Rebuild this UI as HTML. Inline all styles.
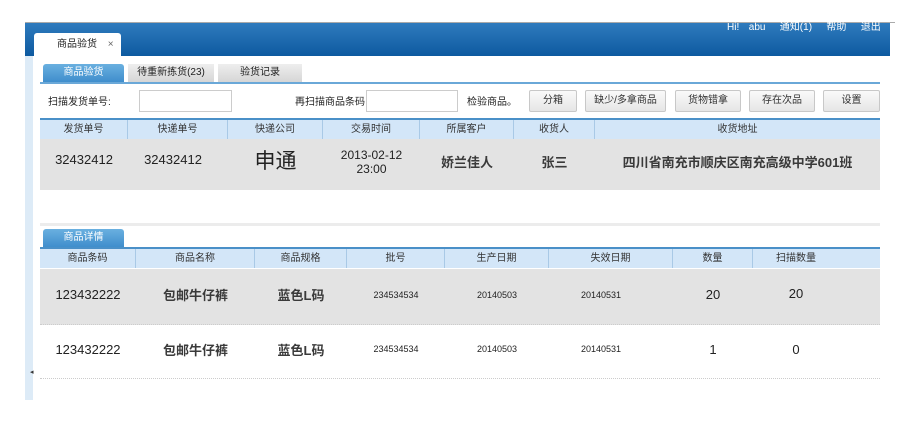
<!DOCTYPE html>
<html><head><meta charset="utf-8"><style>
*{margin:0;padding:0;box-sizing:border-box}
body{width:917px;height:425px;background:#fff;position:relative;overflow:hidden;font-family:"Liberation Sans","Noto Sans CJK SC",sans-serif;color:#222}
.a{position:absolute}
.c{position:absolute;text-align:center;white-space:nowrap}
.b{font-weight:bold;color:#3a3a3a}
.hd{background:#d3e6f8;border-top:2px solid #4a90c8;height:21px}
.hd div{position:absolute;top:0;height:19px;line-height:19px;text-align:center;font-size:10px;color:#333;border-right:1px solid #a9c9e6}
.btn{position:absolute;top:90px;height:22px;border:1px solid #c8c8c8;border-radius:2px;background:linear-gradient(#fafafa,#e6e6e6);font-size:10px;line-height:20px;text-align:center;color:#333}
.inp{position:absolute;top:90px;height:22px;border:1px solid #ccc;background:#fff}
</style></head><body>
<div class="a" style="left:25px;top:22px;width:870px;height:1px;background:#aaa"></div>
<div class="a" style="left:25px;top:23px;width:865px;height:33px;background:linear-gradient(#2f7bbd,#0d5aa0)"></div>
<div class="a" style="left:727px;top:23px;font-size:10px;color:#fff;line-height:10px;word-spacing:2px;z-index:2">Hi!&nbsp; abu &nbsp;&nbsp;通知(1) &nbsp;&nbsp;帮助 &nbsp;&nbsp;退出</div>
<div class="a" style="left:34px;top:33px;width:87px;height:23px;background:#fff;border-radius:3px 3px 0 0;font-size:10px;line-height:24px;padding-left:23px">商品验货 <span style="color:#666;margin-left:8px">×</span></div>
<div class="a" style="left:25px;top:56px;width:8px;height:344px;background:#ddebf7"></div>
<div class="a" style="left:30px;top:368px;font-size:7px;color:#333">◂</div>

<div class="c" style="left:43px;top:64px;width:81px;height:19px;background:linear-gradient(#6ab0e0,#3d8ccb);border-radius:3px 3px 0 0;color:#fff;font-size:10px;line-height:17px">商品验货</div>
<div class="c" style="left:128px;top:64px;width:86px;height:18px;background:linear-gradient(#eee,#d6d6d6);font-size:10px;line-height:17px">待重新拣货(23)</div>
<div class="c" style="left:218px;top:64px;width:84px;height:18px;background:linear-gradient(#eee,#d6d6d6);font-size:10px;line-height:17px">验货记录</div>
<div class="a" style="left:40px;top:82px;width:840px;height:2px;background:#6aa8d8"></div>

<div class="a" style="left:48px;top:93px;font-size:10px">扫描发货单号:</div>
<div class="inp" style="left:139px;width:93px"></div>
<div class="a" style="left:295px;top:93px;font-size:10px">再扫描商品条码</div>
<div class="inp" style="left:366px;width:92px"></div>
<div class="a" style="left:467px;top:93px;font-size:10px">检验商品。</div>
<div class="btn" style="left:529px;width:48px">分箱</div>
<div class="btn" style="left:585px;width:81px">缺少/多拿商品</div>
<div class="btn" style="left:675px;width:66px">货物错拿</div>
<div class="btn" style="left:749px;width:66px">存在次品</div>
<div class="btn" style="left:823px;width:57px">设置</div>

<div class="a hd" style="left:40px;top:118px;width:840px">
<div style="left:0;width:88px">发货单号</div><div style="left:88px;width:100px">快递单号</div><div style="left:188px;width:95px">快递公司</div><div style="left:283px;width:97px">交易时间</div><div style="left:380px;width:94px">所属客户</div><div style="left:474px;width:81px">收货人</div><div style="left:555px;width:285px;border:0">收货地址</div>
</div>
<div class="a" style="left:40px;top:139px;width:840px;height:51px;background:#e3e3e3"></div>
<div class="c" style="left:40px;top:152px;width:88px;font-size:13px">32432412</div>
<div class="c" style="left:128px;top:152px;width:90px;font-size:13px">32432412</div>
<div class="c" style="left:228px;top:145px;width:95px;font-size:21px">申通</div>
<div class="c" style="left:323px;top:148px;width:97px;font-size:12px;line-height:14px">2013-02-12<br>23:00</div>
<div class="c b" style="left:420px;top:152px;width:94px;font-size:13px">娇兰佳人</div>
<div class="c b" style="left:514px;top:152px;width:81px;font-size:13px">张三</div>
<div class="c b" style="left:595px;top:152px;width:285px;font-size:13px">四川省南充市顺庆区南充高级中学601班</div>

<div class="a" style="left:40px;top:223px;width:840px;height:3px;background:#ececec"></div>
<div class="c" style="left:43px;top:229px;width:81px;height:19px;background:linear-gradient(#6ab0e0,#3d8ccb);border-radius:3px 3px 0 0;color:#fff;font-size:10px;line-height:17px">商品详情</div>
<div class="a hd" style="left:40px;top:247px;width:840px">
<div style="left:0;width:96px">商品条码</div><div style="left:96px;width:119px">商品名称</div><div style="left:215px;width:92px">商品规格</div><div style="left:307px;width:98px">批号</div><div style="left:405px;width:104px">生产日期</div><div style="left:509px;width:124px">失效日期</div><div style="left:633px;width:80px">数量</div><div style="left:713px;width:86px;border:0">扫描数量</div>
</div>
<div class="a" style="left:40px;top:269px;width:840px;height:56px;background:#e3e3e3;border-bottom:1px dotted #ccc"></div>
<div class="a" style="left:40px;top:378px;width:840px;height:1px;border-bottom:1px dotted #ccc"></div>

<div class="c" style="left:40px;top:287px;width:96px;font-size:13px">123432222</div>
<div class="c b" style="left:136px;top:285px;width:119px;font-size:13px">包邮牛仔裤</div>
<div class="c b" style="left:255px;top:285px;width:92px;font-size:13px">蓝色L码</div>
<div class="c" style="left:347px;top:290px;width:98px;font-size:9px">234534534</div>
<div class="c" style="left:445px;top:290px;width:104px;font-size:9px">20140503</div>
<div class="c" style="left:549px;top:290px;width:104px;font-size:9px">20140531</div>
<div class="c" style="left:673px;top:287px;width:80px;font-size:13px">20</div>
<div class="c" style="left:753px;top:286px;width:86px;font-size:13px">20</div>

<div class="c" style="left:40px;top:342px;width:96px;font-size:13px">123432222</div>
<div class="c b" style="left:136px;top:340px;width:119px;font-size:13px">包邮牛仔裤</div>
<div class="c b" style="left:255px;top:340px;width:92px;font-size:13px">蓝色L码</div>
<div class="c" style="left:347px;top:344px;width:98px;font-size:9px">234534534</div>
<div class="c" style="left:445px;top:344px;width:104px;font-size:9px">20140503</div>
<div class="c" style="left:549px;top:344px;width:104px;font-size:9px">20140531</div>
<div class="c" style="left:673px;top:342px;width:80px;font-size:13px">1</div>
<div class="c" style="left:753px;top:342px;width:86px;font-size:13px">0</div>
</body></html>
